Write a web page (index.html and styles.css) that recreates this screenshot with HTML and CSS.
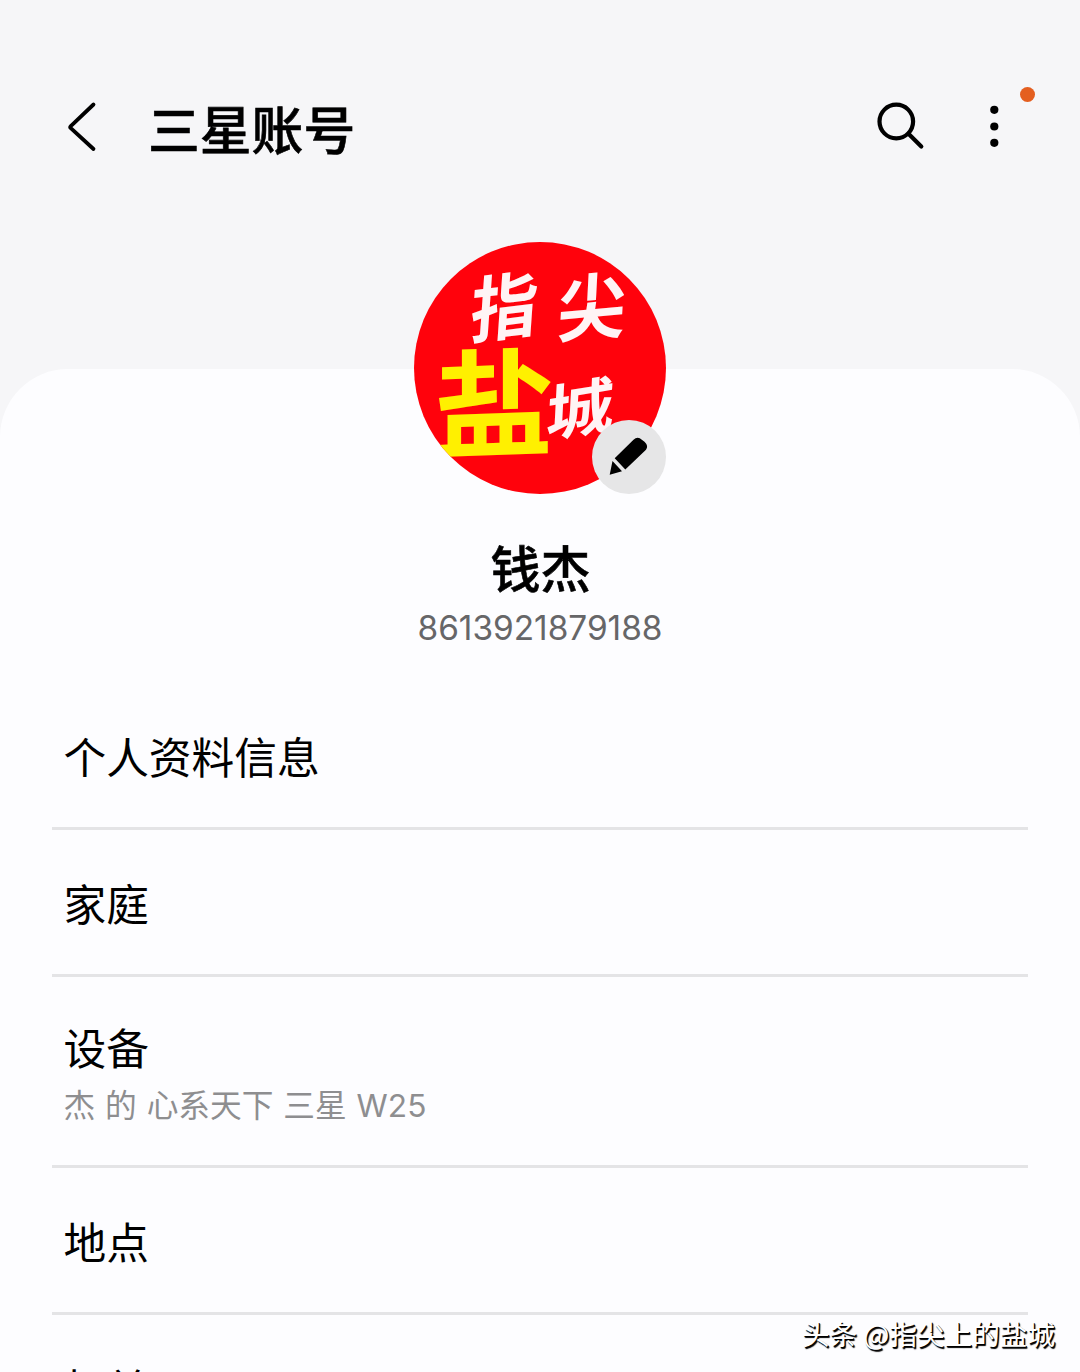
FILE: index.html
```html
<!DOCTYPE html>
<html lang="zh-CN">
<head>
<meta charset="utf-8">
<title>三星账号</title>
<link rel="stylesheet" href="styles.css">
</head>
<body>
<div class="screen">
  <header class="bar">
    <svg class="back" viewBox="0 0 32 52"><path d="M27.5 4.5 4.8 26Q3.7 27.1 4.8 28.2L27.5 49"/></svg>
    <h1 class="title">三星账号</h1>
    <svg class="search" viewBox="0 0 50 50"><circle cx="21.3" cy="20.5" r="16.8"/><path d="M33.5 32.7 46.3 45.4"/></svg>
    <div class="more">
      <svg class="dots" viewBox="0 0 10 44"><circle cx="5.3" cy="5.8" r="4.1"/><circle cx="5.3" cy="22.5" r="4.1"/><circle cx="5.3" cy="38.8" r="4.1"/></svg>
      <span class="notice"></span>
    </div>
  </header>
  <main class="sheet">
    <div class="avatar">
      <svg class="photo" viewBox="0 0 252 252">
        <defs><clipPath id="round"><circle cx="126" cy="126" r="126"/></clipPath></defs>
        <g clip-path="url(#round)">
          <rect width="252" height="252" fill="#ff020c"/>
          <text class="brush white" transform="translate(55 96) skewX(-4) skewY(-7) scale(.95 1.03)" font-size="70">指</text>
          <text class="brush white" transform="translate(142 95) skewX(-3) skewY(-5) scale(.98 1.03)" font-size="70">尖</text>
          <text class="brush yellow" transform="translate(19 208) skewY(-2) scale(1.03 1)" font-size="117">盐</text>
          <text class="brush white" transform="translate(131 195) skewX(-3) skewY(-9) scale(1.02 .93)" font-size="66">城</text>
        </g>
      </svg>
      <span class="edit">
        <svg viewBox="0 0 74 74"><path d="M22.7 38.2 41.5 19.8Q44.5 16.9 47.8 18.3L52.5 21.8Q56.8 26 54 29.8L33.3 49.6ZM20.5 41 30 51.2 17.7 54.8Z"/></svg>
      </span>
    </div>
    <h2 class="name">钱杰</h2>
    <p class="phone">8613921879188</p>
    <ul class="list">
      <li class="row"><span class="label">个人资料信息</span></li>
      <li class="row"><span class="label">家庭</span></li>
      <li class="row tall"><span class="label">设备</span><span class="sub">杰 的 心系天下 三星 <span class="model">W25</span></span></li>
      <li class="row"><span class="label">地点</span></li>
      <li class="row last"><span class="label">权益</span></li>
    </ul>
  </main>
  <div class="watermark">头条 @指尖上的盐城</div>
</div>
</body>
</html>
```
FILE: styles.css
```css
* { box-sizing: border-box; margin: 0; padding: 0; }

body {
  background: #f6f6f8;
  color: #000;
  font-family: "Noto Sans CJK SC", sans-serif;
}

.screen {
  position: relative;
  height: 1372px;
  overflow: hidden;
}

.bar {
  display: flex;
  align-items: center;
  height: 369px;
  padding: 0 80px 117px 66px;
}

.back {
  width: 32px;
  height: 52px;
  fill: none;
  stroke: #000;
  stroke-width: 3.8;
  stroke-linecap: round;
}

.title {
  flex: 1;
  margin-left: 50px;
  padding-top: 3px;
  font-size: 51.8px;
  font-weight: 500;
  line-height: 70px;
  -webkit-text-stroke: .6px #000;
}

.search {
  width: 50px;
  height: 50px;
  margin-right: 64px;
  fill: none;
  stroke: #000;
  stroke-width: 4.2;
  stroke-linecap: round;
}

.more { position: relative; width: 11px; height: 44px; }
.dots { display: block; width: 10px; height: 44px; }

.notice {
  position: absolute;
  left: 31px;
  top: -17px;
  width: 15px;
  height: 15px;
  border-radius: 50%;
  background: #e45f20;
}

.sheet {
  display: flex;
  flex-direction: column;
  align-items: center;
  height: 1003px;
  border-radius: 68px 68px 0 0;
  background: #fdfdff;
}

.avatar {
  position: relative;
  flex: none;
  width: 252px;
  height: 252px;
  margin-top: -127px;
}

.photo { display: block; width: 252px; height: 252px; }

.brush {
  font-family: "Noto Sans CJK SC", sans-serif;
  font-weight: 700;
}

.white { fill: #fff4f5; }
.yellow { fill: #fff000; }

.edit {
  position: absolute;
  right: 0;
  bottom: 0;
  width: 74px;
  height: 74px;
  border-radius: 50%;
  background: #e6e6e7;
}

.edit svg { display: block; }

.name {
  margin: 37px 0 3px;
  padding-left: 1px;
  font-size: 50px;
  font-weight: 500;
  line-height: 70px;
  -webkit-text-stroke: .6px #000;
}

.phone {
  flex: none;
  height: 79px;
  color: #666668;
  font-family: Inter, "Noto Sans", sans-serif;
  font-size: 33.4px;
  line-height: 48px;
}

.list { width: 976px; list-style: none; }

.row {
  display: flex;
  flex-direction: column;
  justify-content: center;
  height: 147px;
  padding: 0 11.5px 1px;
  border-bottom: 3px solid #e4e4e6;
}

.tall { height: 191px; padding-top: 3px; padding-bottom: 0; }
.last { padding-bottom: 0; }
.label { font-size: 42.7px; line-height: 60px; }
.sub {
  margin-top: 3px;
  color: #8e8e90;
  font-size: 31.7px;
  line-height: 48px;
  word-spacing: 2.8px;
}
.model { font-family: Inter, "Noto Sans", sans-serif; }

.watermark {
  position: absolute;
  right: 25px;
  bottom: 18px;
  color: #fff;
  font-size: 27.6px;
  line-height: 42px;
  text-shadow: 1.5px 1.5px 1px #000, 1px 1px 0 #000;
  white-space: nowrap;
}
```
